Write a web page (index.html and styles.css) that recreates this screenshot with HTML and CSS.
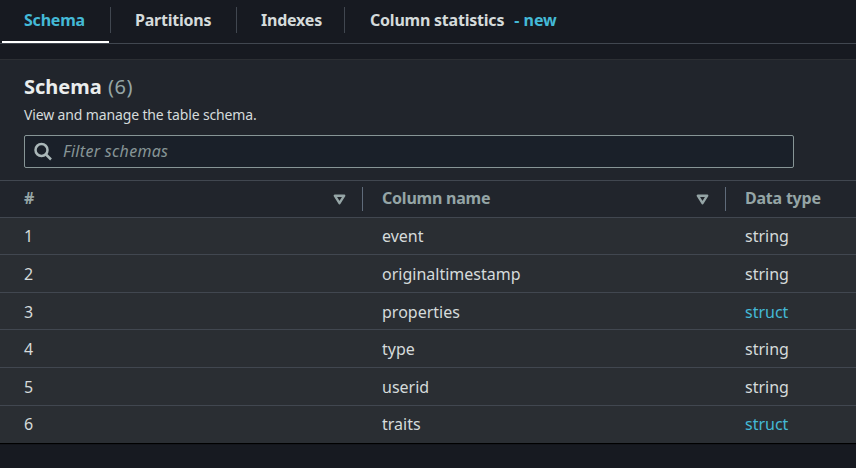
FILE: index.html
```html
<!DOCTYPE html>
<html lang="en">
<head>
<meta charset="utf-8">
<title>Schema</title>
<link rel="stylesheet" href="styles.css">
</head>
<body>
<nav class="tabs">
  <a class="tab tab-active"><span>Schema</span></a>
  <a class="tab tab-partitions"><span>Partitions</span></a>
  <a class="tab tab-indexes"><span>Indexes</span></a>
  <a class="tab tab-stats"><span>Column statistics</span><span class="new">- new</span></a>
</nav>
<main class="panel">
  <header class="panel-header">
    <h2>Schema <span class="count">(6)</span></h2>
    <p>View and manage the table schema.</p>
    <div class="filter">
      <svg width="20" height="20" viewBox="0 0 20 20"><circle cx="7.500" cy="8" r="6"/><path d="M12 12.500l5 5"/></svg>
      <span>Filter schemas</span>
    </div>
  </header>
  <div class="table">
    <div class="row head">
      <div class="cell"><span>#</span><svg class="sort" width="13" height="11" viewBox="0 0 13 11"><path d="M1.800 1.700h9.400L6.500 9.200z"/></svg></div>
      <div class="cell"><span>Column name</span><svg class="sort" width="13" height="11" viewBox="0 0 13 11"><path d="M1.800 1.700h9.400L6.500 9.200z"/></svg></div>
      <div class="cell"><span>Data type</span></div>
    </div>
    <div class="row short"><div class="cell">1</div><div class="cell">event</div><div class="cell">string</div></div>
    <div class="row"><div class="cell">2</div><div class="cell">originaltimestamp</div><div class="cell">string</div></div>
    <div class="row short lower"><div class="cell">3</div><div class="cell">properties</div><div class="cell link">struct</div></div>
    <div class="row"><div class="cell">4</div><div class="cell">type</div><div class="cell">string</div></div>
    <div class="row"><div class="cell">5</div><div class="cell">userid</div><div class="cell">string</div></div>
    <div class="row last"><div class="cell">6</div><div class="cell">traits</div><div class="cell link">struct</div></div>
  </div>
</main>
</body>
</html>
```

FILE: styles.css
```css
* { box-sizing: border-box; }
body {
  margin: 0;
  height: 468px;
  overflow: hidden;
  background: #171a21;
  color: #d5dbdb;
  font: 16px/22px "Noto Sans", sans-serif;
}
.tabs {
  display: flex;
  height: 44px;
  border-bottom: 1px solid #414750;
  font-weight: 700;
  letter-spacing: -0.22px;
  padding-left: 2px;
}
.tab {
  display: flex;
  height: 43px;
  padding: 9px 0 0 24px;
  white-space: nowrap;
  background: linear-gradient(#414750, #414750) right 7px / 1px 26px no-repeat;
}
.tab-active {
  width: 109px;
  padding-left: 22px;
  color: #44b9d6;
  background: linear-gradient(#fff, #fff) left bottom / 107px 2px no-repeat,
    linear-gradient(#414750, #414750) right 7px / 1px 26px no-repeat;
}
.tab-partitions { width: 126px; }
.tab-indexes { width: 108px; }
.tab-stats { padding-left: 25px; background: none; }
.new { margin-left: 10px; color: #44b9d6; letter-spacing: 0; }
.panel {
  height: 384px;
  margin-top: 15px;
  border-top: 1px solid #2c2f34;
  background: #21252c;
  box-shadow: 0 1px 1px #000;
}
.panel-header { height: 120px; padding: 13px 24px 0; }
h2 {
  margin: 0;
  color: #eaeded;
  font-size: 20px;
  line-height: 28px;
  font-weight: 700;
}
.count { color: #95a5a6; font-weight: 400; margin-left: 1px; letter-spacing: 0.5px; }
p { margin: 3px 0 0; font-size: 14px; line-height: 22px; letter-spacing: -0.14px; }
.filter {
  display: flex;
  align-items: center;
  width: 770px;
  height: 33px;
  margin-top: 9px;
  padding-left: 9px;
  border: 1px solid #879596;
  border-radius: 2px;
  background: #1a2029;
  color: #879596;
  font-style: italic;
  letter-spacing: 0.3px;
}
.filter span { padding-bottom: 1px; }
.filter svg { margin-right: 9px; fill: none; stroke: #aab7b8; stroke-width: 2.5; }
.row {
  display: grid;
  grid-template-columns: 363px 363px 1fr;
  height: 38px;
  border-top: 1px solid #414750;
  background: #2a2e33;
}
.cell { display: flex; align-items: center; padding-left: 19px; }
.cell:first-child { padding-left: 24px; }
.short { height: 37px; }
.lower .cell { padding-top: 2px; }
.last .cell { padding-bottom: 1px; }
.head {
  height: 37px;
  background: #21252c;
  color: #95a5a6;
  font-weight: 700;
  letter-spacing: -0.22px;
}
.head .cell > span { padding-bottom: 2px; }
.head .cell:not(:last-child) {
  justify-content: space-between;
  padding-right: 17px;
  background: linear-gradient(#5f6b7a, #5f6b7a) right 6px / 1px 24px no-repeat;
}
.sort { fill: none; stroke: #95a5a6; stroke-width: 2.4; stroke-linejoin: round; }
.link { color: #44b9d6; }
```
